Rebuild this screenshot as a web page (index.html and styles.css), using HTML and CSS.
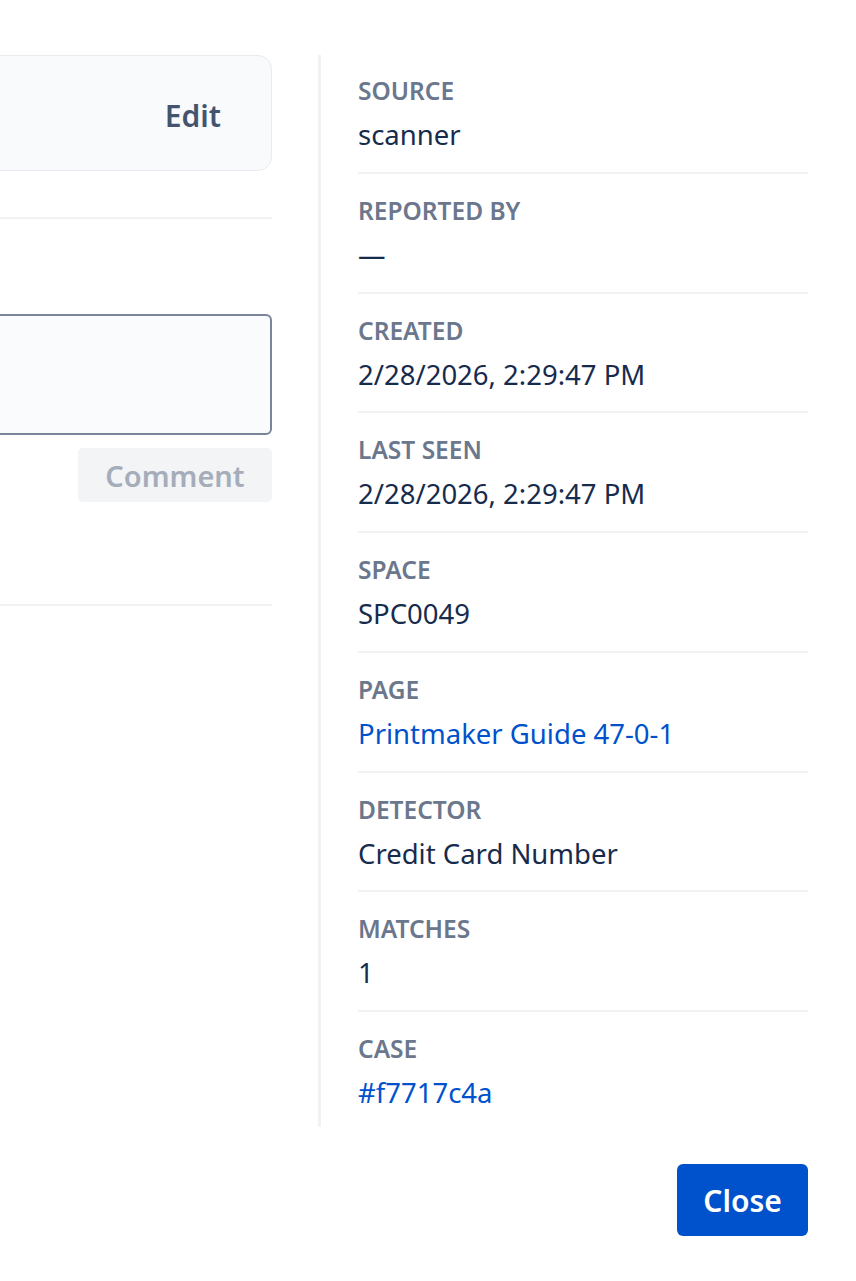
FILE: index.html
```html
<!DOCTYPE html>
<html lang="en">
<head>
    <meta charset="UTF-8">
    <meta name="viewport" content="width=device-width, initial-scale=1.0">
    <title>Finding details</title>
    <link rel="stylesheet" href="styles.css">
</head>
<body>
    <div class="modal">
        <div class="body">
            <div class="main">
                <div class="card">
                    <button class="edit">Edit</button>
                </div>
                <hr class="rule">
                <div class="comments">
                    <textarea class="comment_box"></textarea>
                    <div class="comment_bar">
                        <button class="comment_btn" disabled>Comment</button>
                    </div>
                </div>
                <hr class="rule">
            </div>
            <div class="side">
                <div class="field">
                    <div class="label">Source</div>
                    <div class="value">scanner</div>
                </div>
                <div class="field">
                    <div class="label">Reported by</div>
                    <div class="value">&mdash;</div>
                </div>
                <div class="field">
                    <div class="label">Created</div>
                    <div class="value">2/28/2026, 2:29:47 PM</div>
                </div>
                <div class="field">
                    <div class="label">Last seen</div>
                    <div class="value">2/28/2026, 2:29:47 PM</div>
                </div>
                <div class="field">
                    <div class="label">Space</div>
                    <div class="value">SPC0049</div>
                </div>
                <div class="field">
                    <div class="label">Page</div>
                    <div class="value"><a href="#">Printmaker Guide 47-0-1</a></div>
                </div>
                <div class="field">
                    <div class="label">Detector</div>
                    <div class="value">Credit Card Number</div>
                </div>
                <div class="field">
                    <div class="label">Matches</div>
                    <div class="value">1</div>
                </div>
                <div class="field">
                    <div class="label">Case</div>
                    <div class="value"><a href="#">#f7717c4a</a></div>
                </div>
            </div>
        </div>
        <div class="footer">
            <button class="close">Close</button>
        </div>
    </div>
</body>
</html>
```

FILE: styles.css
```css
html, body{margin: 0; padding: 0; background: #fff;}
body{font-family: "Noto Sans", "Open Sans", sans-serif; color: #172b4d; overflow: hidden;}
button{font-family: inherit;}

.modal{padding: 55px 48px 0 0;}
.body{display: flex;}
.main{width: 312px; margin-left: -40px; margin-right: 46px;}
.side{flex: 1; border-left: 3px solid #f1f2f4; padding-left: 37px;}

.card{height: 116px; background: #f9fafb; border: 1px solid #e9ebee; border-radius: 14px;
 display: flex; align-items: center; justify-content: flex-end; padding: 4px 50px 0 0; box-sizing: border-box;}
.edit{border: none; background: none; padding: 0; font-size: 30px; font-weight: 600; color: #44546f;}
.rule{border: none; border-top: 2px solid #f1f2f4; margin: 46px 0 0 0;}
.comments{padding-top: 95px;}
.comment_box{display: block; width: 100%; height: 121px; box-sizing: border-box; resize: none;
 background: #fafbfc; border: 2px solid #7a8599; border-radius: 6px;}
.comment_bar{display: flex; justify-content: flex-end; margin-top: 13px;}
.comment_btn{border: none; background: #f3f4f6; color: #a5adba; font-size: 29px; font-weight: 600;
 width: 194px; height: 54px; border-radius: 5px; padding: 0;}
.comments + .rule{margin-top: 102px;}

.field{border-bottom: 2px solid #f1f2f4; padding: 21px 0 16.75px;}
.field:first-child{padding-top: 20px;}
.field:last-child{border-bottom: none; padding-bottom: 14px;}
.label{font-size: 24.5px; line-height: 32px; font-weight: 600; text-transform: uppercase; color: #6b778c;}
.value{font-size: 27.5px; line-height: 40px; margin-top: 8px; color: #172b4d;}
.value a{color: #0052cc; text-decoration: none;}

.footer{display: flex; justify-content: flex-end; padding-top: 37px;}
.close{background: #0052cc; color: #fff; border: none; border-radius: 6px; font-size: 30px; font-weight: 600;
 width: 131px; height: 72px; padding: 0;}
```
